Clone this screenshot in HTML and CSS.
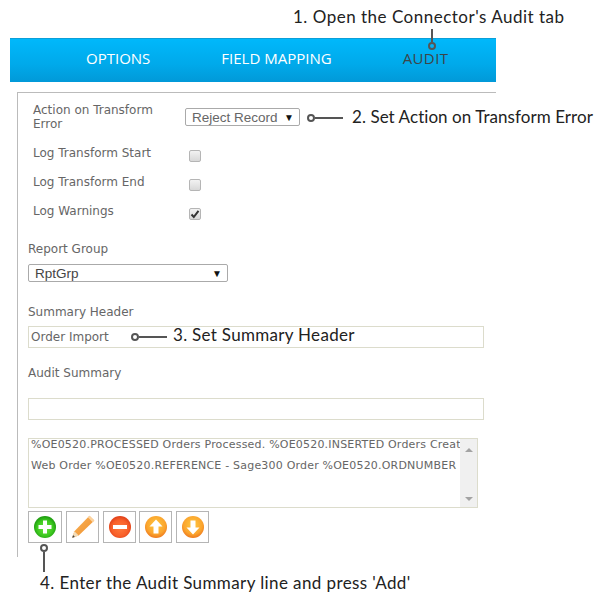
FILE: index.html
```html
<!DOCTYPE html>
<html lang="en">
<head>
    <meta charset="UTF-8">
    <meta name="viewport" content="width=device-width, initial-scale=1.0">
    <title>Connector Audit</title>
    <link rel="stylesheet" href="styles.css">
</head>
<body>
    <div class="page">
        <!-- Tab bar -->
        <nav class="tabs">
            <a class="tab tab-options" href="#">OPTIONS</a>
            <a class="tab tab-mapping" href="#">FIELD MAPPING</a>
            <a class="tab tab-audit" href="#">AUDIT</a>
        </nav>

        <!-- Audit form -->
        <form class="panel">
            <div class="row row-action">
                <label class="row-label">Action on Transform Error</label>
                <div class="fake-select select-action">
                    <span>Reject Record</span>
                    <span class="arrow">&#9660;</span>
                </div>
            </div>
            <div class="row row-check">
                <label class="row-label">Log Transform Start</label>
                <span class="check"></span>
            </div>
            <div class="row row-check">
                <label class="row-label">Log Transform End</label>
                <span class="check"></span>
            </div>
            <div class="row row-check">
                <label class="row-label">Log Warnings</label>
                <span class="check">
                    <svg width="12" height="12" viewBox="0 0 12 12"><path d="M2.500 6.500l2.300 2.500L9.500 2.800" fill="none" stroke="#333" stroke-width="2"/></svg>
                </span>
            </div>

            <label class="field-label label-group">Report Group</label>
            <div class="fake-select select-group">
                <span>RptGrp</span>
                <span class="arrow">&#9660;</span>
            </div>

            <label class="field-label label-header">Summary Header</label>
            <input class="text-input" type="text" value="Order Import">

            <label class="field-label label-audit">Audit Summary</label>
            <input class="text-input input-audit" type="text">

            <div class="listbox">
                <div class="list-lines">
                    <div class="list-line">%OE0520.PROCESSED Orders Processed. %OE0520.INSERTED Orders Created</div>
                    <div class="list-line">Web Order %OE0520.REFERENCE - Sage300 Order %OE0520.ORDNUMBER</div>
                </div>
                <div class="scrollbar">
                    <span class="scroll-up"></span>
                    <span class="scroll-down"></span>
                </div>
            </div>

            <div class="buttons">
                <button class="icon-btn btn-add" type="button">
                    <svg width="24" height="24" viewBox="0 0 24 24">
                        <defs>
                            <radialGradient id="green-ball" cx="50%" cy="55%" r="52%">
                                <stop offset="0" stop-color="#6be83e"/>
                                <stop offset=".7" stop-color="#3cc71f"/>
                                <stop offset="1" stop-color="#1f9e10"/>
                            </radialGradient>
                        </defs>
                        <circle cx="12" cy="12" r="11" fill="url(#green-ball)"/>
                        <path d="M10 5.500h4V10h4.500v4H14v4.500h-4V14H5.500v-4H10z" fill="#fff"/>
                    </svg>
                </button>
                <button class="icon-btn" type="button">
                    <svg width="28" height="28" viewBox="0 0 26 26">
                        <defs>
                            <linearGradient id="pencil-body" x1="0" y1="0" x2="1" y2="1">
                                <stop offset="0" stop-color="#f9b45c"/>
                                <stop offset="1" stop-color="#ef8f2a"/>
                            </linearGradient>
                        </defs>
                        <path d="M19 2.500l4.500 4.500L9 21l-6 2 2-6z" fill="url(#pencil-body)"/>
                        <path d="M19 2.500l4.500 4.500-1.500 1.500L17.500 4z" fill="#fbd3a0"/>
                        <path d="M5 17l4 4-6 2z" fill="#f3dcb8"/>
                        <path d="M3 23l.8-2.500 1.700 1.700z" fill="#444"/>
                    </svg>
                </button>
                <button class="icon-btn" type="button">
                    <svg width="24" height="24" viewBox="0 0 24 24">
                        <defs>
                            <radialGradient id="red-ball" cx="50%" cy="55%" r="52%">
                                <stop offset="0" stop-color="#ff7a3c"/>
                                <stop offset=".7" stop-color="#f8602a"/>
                                <stop offset="1" stop-color="#e2431a"/>
                            </radialGradient>
                        </defs>
                        <circle cx="12" cy="12" r="11" fill="url(#red-ball)"/>
                        <rect x="5" y="10" width="14" height="4" fill="#fff"/>
                    </svg>
                </button>
                <button class="icon-btn btn-up" type="button">
                    <svg width="24" height="24" viewBox="0 0 24 24">
                        <defs>
                            <radialGradient id="orange-ball" cx="50%" cy="40%" r="60%">
                                <stop offset="0" stop-color="#ffc83f"/>
                                <stop offset=".7" stop-color="#fba52e"/>
                                <stop offset="1" stop-color="#ee7a1e"/>
                            </radialGradient>
                        </defs>
                        <circle cx="12" cy="12" r="11" fill="url(#orange-ball)"/>
                        <path d="M12 4.500l6.500 7H14.500v7h-5v-7H5.500z" fill="#fff"/>
                    </svg>
                </button>
                <button class="icon-btn" type="button">
                    <svg width="24" height="24" viewBox="0 0 24 24">
                        <circle cx="12" cy="12" r="11" fill="url(#orange-ball)"/>
                        <path d="M12 19.500l-6.500-7H9.500v-7h5v7h4z" fill="#fff"/>
                    </svg>
                </button>
            </div>
        </form>

        <!-- Callouts on top of the screenshot -->
        <div class="note note-1">1. Open the Connector's Audit tab</div>
        <div class="pin pin-1"><span class="line-v line-short"></span><span class="dot"></span></div>

        <div class="pin pin-2"><span class="dot"></span><span class="line-h"></span></div>
        <div class="note note-2">2. Set Action on Transform Error</div>

        <div class="pin pin-3"><span class="dot"></span><span class="line-h"></span></div>
        <div class="note note-3">3. Set Summary Header</div>

        <div class="pin pin-4"><span class="dot"></span><span class="line-v"></span></div>
        <div class="note note-4">4. Enter the Audit Summary line and press 'Add'</div>
    </div>
</body>
</html>
```

FILE: styles.css
```css
/* CSS Reset */
* {
    margin: 0;
    padding: 0;
    box-sizing: border-box;
}

body {
    font-family: "DejaVu Sans", sans-serif;
    background-color: #fff;
    color: #666;
}

.page {
    position: relative;
    width: 609px;
    height: 605px;
    padding: 38px 113px 0 10px;
    overflow: hidden;
}

/* Tab bar */
.tabs {
    height: 44px;
    display: flex;
    align-items: center;
    padding: 0 0 6px 76px;
    background: linear-gradient(#00b8fb, #00a9ea 60%, #0199d8);
    border-top: 1px solid #0b9fd8;
}

.tab {
    font-family: "Open Sans", sans-serif;
    font-size: 15px;
    font-weight: 500;
    color: #fff;
    text-decoration: none;
}

.tab-mapping {
    margin-left: 71px;
}

.tab-audit {
    margin-left: 71px;
    color: #3d4448;
    letter-spacing: .4px;
}

/* Form */
.panel {
    margin: 10px 0 0 7px;
    height: 465px;
    padding: 10px 0 0 10px;
    border-top: 1px solid #bbb;
    border-left: 1px solid #bbb;
    font-size: 12px;
}

.row {
    display: flex;
    padding-left: 5px;
}

.row-label {
    display: block;
    width: 152px;
    line-height: 14px;
}

.row-action {
    height: 43px;
}

.select-action {
    width: 115px;
    margin-top: 5px;
}

.row-check {
    height: 29px;
}

.check {
    display: block;
    width: 12px;
    height: 12px;
    margin: 4px 0 0 4px;
    border: 1px solid #b5b5b5;
    border-radius: 2px;
    background: linear-gradient(#f2f2f2, #d8d8d8);
}

.check svg {
    display: block;
    margin: -1px;
}

.fake-select {
    height: 18px;
    display: flex;
    justify-content: space-between;
    align-items: center;
    padding: 0 5px 0 6px;
    border: 1px solid #aaa;
    border-radius: 2px;
    background-color: #fff;
    color: #666;
    font-family: "Liberation Sans", sans-serif;
    font-size: 13.5px;
}

.arrow {
    font-size: 10px;
    color: #111;
}

.field-label {
    display: block;
    line-height: 14px;
}

.label-group {
    margin-top: 9px;
}

.select-group {
    width: 200px;
    margin-top: 8px;
    color: #444;
}

.label-header {
    margin-top: 23px;
}

.text-input {
    display: block;
    width: 456px;
    height: 22px;
    margin-top: 7px;
    padding: 0 2px;
    border: 1px solid #dcdccc;
    background-color: #fff;
    font-family: inherit;
    font-size: 12px;
    color: #666;
}

.label-audit {
    margin-top: 18px;
}

.input-audit {
    margin-top: 18px;
}

.listbox {
    display: flex;
    width: 450px;
    height: 70px;
    margin-top: 18px;
    border: 1px solid #dcdccc;
}

.list-lines {
    flex: 1;
    min-width: 0;
    overflow: hidden;
    padding-left: 2px;
    white-space: nowrap;
    font-size: 11px;
    letter-spacing: .2px;
    line-height: 21px;
}

.list-line:first-child {
    margin-top: -5px;
}

.scrollbar {
    width: 17px;
    display: flex;
    flex-direction: column;
    justify-content: space-between;
    align-items: center;
    padding: 9px 0 6px;
    background-color: #f0f0f0;
}

.scroll-up {
    border: 4px solid transparent;
    border-top: 0;
    border-bottom: 4px solid #a3a3a3;
}

.scroll-down {
    border: 4px solid transparent;
    border-bottom: 0;
    border-top: 4px solid #a3a3a3;
}

.buttons {
    display: flex;
    gap: 4px;
    margin-top: 3px;
}

.icon-btn {
    width: 33px;
    height: 32px;
    display: flex;
    justify-content: center;
    align-items: center;
    border: 1px solid #b5b5b5;
    background-color: #fff;
}

.btn-add {
    width: 34px;
}

.btn-up {
    margin-left: -1px;
}

/* Callouts */
.note {
    position: absolute;
    font-family: "Lato", sans-serif;
    font-size: 17px;
    line-height: 20px;
    color: #222;
    white-space: nowrap;
}

.note-1 { left: 293px; top: 7px; letter-spacing: .5px; }
.note-2 { left: 352px; top: 107px; letter-spacing: .06px; }
.note-3 { left: 173px; top: 325px; letter-spacing: .3px; }
.note-4 { left: 40px; top: 573px; letter-spacing: .4px; }

.pin {
    position: absolute;
    display: flex;
    align-items: center;
}

.pin-1 { left: 428px; top: 29px; flex-direction: column; }
.pin-2 { left: 307px; top: 114px; }
.pin-3 { left: 131px; top: 333px; }
.pin-4 { left: 40px; top: 544px; flex-direction: column; }

.dot {
    width: 8px;
    height: 8px;
    border: 2px solid #555;
    border-radius: 50%;
    background-color: #fff;
}

.pin-1 .dot {
    background-color: transparent;
}

.line-h {
    width: 28px;
    height: 2px;
    background-color: #555;
}

.line-v {
    width: 2px;
    height: 20px;
    background-color: #555;
}

.line-short {
    height: 13px;
}
```
